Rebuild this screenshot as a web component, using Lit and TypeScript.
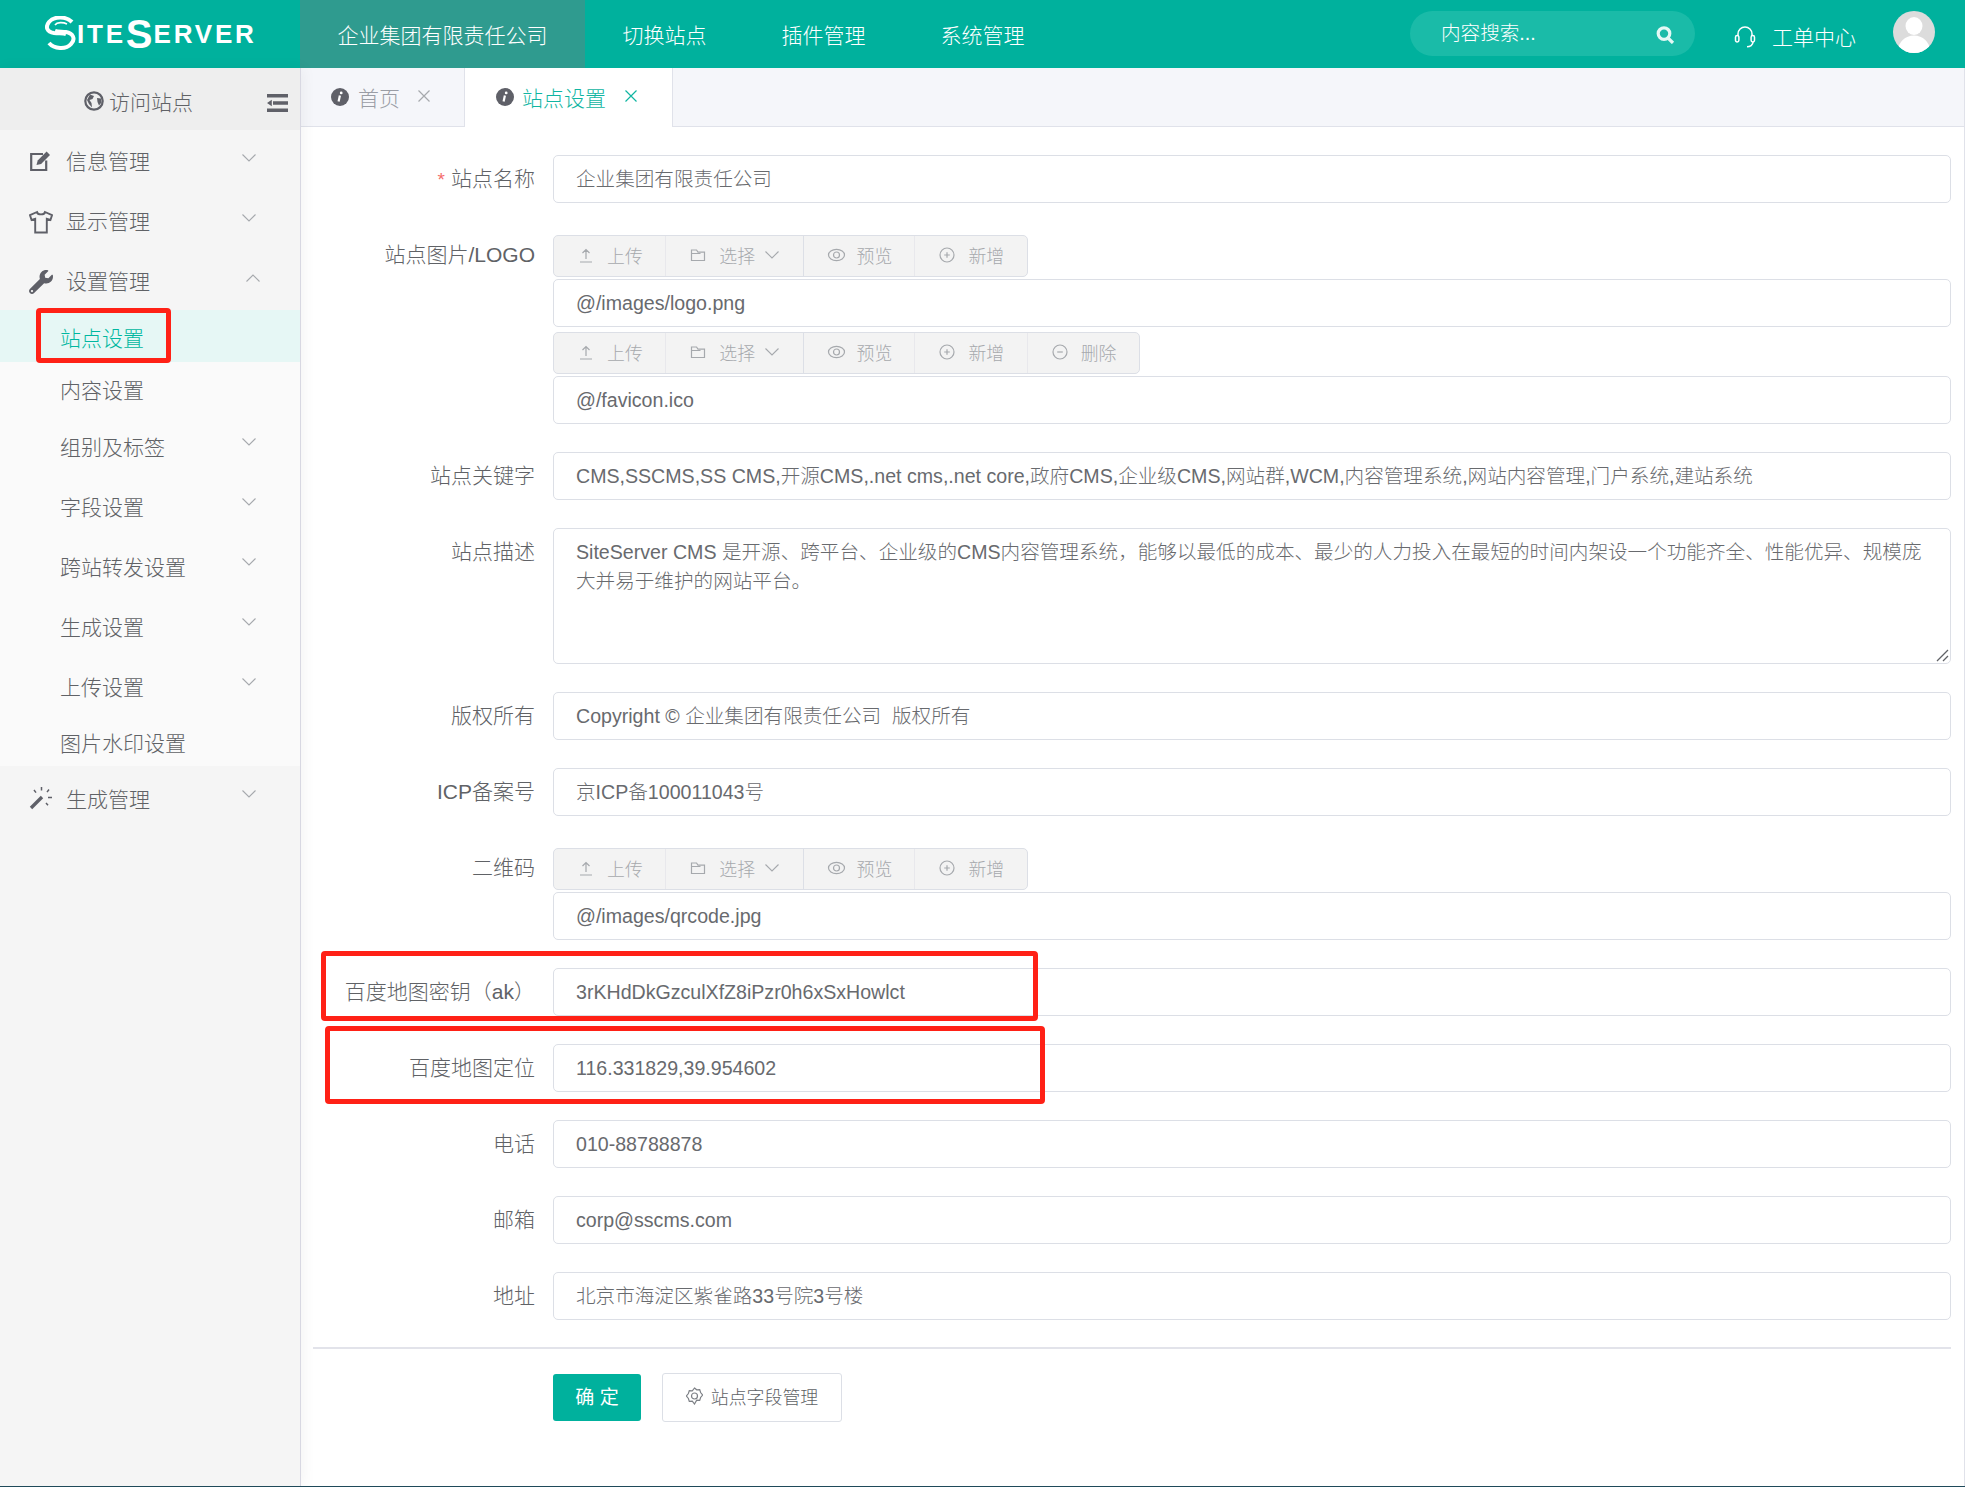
import { LitElement, html, css, svg } from "lit";
import { customElement } from "lit/decorators.js";

const wrench = "M507.73 109.1c-2.24-9.03-13.54-12.09-20.12-5.51l-74.36 74.36-67.88-11.31-11.31-67.88 74.36-74.36c6.62-6.62 3.43-17.9-5.66-20.16-47.38-11.74-99.55.91-136.58 37.93-39.64 39.64-50.55 97.1-34.05 147.2L18.74 402.76c-24.99 24.99-24.99 65.51 0 90.5 24.99 24.99 65.51 24.99 90.5 0l213.21-213.21c50.12 16.71 107.47 5.68 147.37-34.22 37.07-37.07 49.7-89.32 37.91-136.73zM64 472c-13.25 0-24-10.75-24-24 0-13.26 10.75-24 24-24s24 10.74 24 24c0 13.25-10.75 24-24 24z";

const ic = {
  edit: html`<svg width="22" height="22" viewBox="0 0 22 22"><path d="M14 4H2.2v16h15V10.5" fill="none" stroke="#5f6068" stroke-width="2.2"/><path d="M7.5 15l1.2-4.6L17.6 1.6l3.4 3.4-8.9 8.9z" fill="#5f6068"/></svg>`,
  shirt: html`<svg width="24" height="24" viewBox="0 0 24 24"><path d="M8 2 1 5.2 2.6 10l3.6-1.1V22.5h11.6V8.9l3.6 1.1L23 5.2 16 2c-.6 3.2-7.4 3.2-8 0z" fill="none" stroke="#5f6068" stroke-width="1.9"/></svg>`,
  wrench: html`<svg width="24" height="24" viewBox="0 0 512 512"><path d="${wrench}" fill="#5f6068"/></svg>`,
  wand: html`<svg width="24" height="24" viewBox="0 0 24 24"><path d="M2 22 13 11" stroke="#5f6068" stroke-width="3.4"/><path d="M12.5 1v3.5M5 4l2 2.6M20 3.5l-2 2.6M19 11.5h4M17 17l2 2.2" stroke="#5f6068" stroke-width="1.5" fill="none"/></svg>`,
  globe: html`<svg width="20" height="20" viewBox="0 0 20 20"><circle cx="10" cy="10" r="8.7" fill="none" stroke="#5f6068" stroke-width="2.2"/><path d="M6 3.5 10 5 8.5 8 5.5 9l2 3 .5 4.500L5 13 3 9zM13 7l4 .5.5 4-2.500 3-1.500-3.500z" fill="#5f6068"/></svg>`,
  menu: html`<svg width="21" height="18" viewBox="0 0 21 18"><path d="M0 0h21v3.4H0zM6 7.3h15v3.4H6zM0 14.6h21V18H0zM0 9l4.8-3.2v6.4z" fill="#5f6068"/></svg>`,
  search: html`<svg width="19" height="18" viewBox="0 0 19 18"><circle cx="8" cy="7.6" r="5.8" fill="none" stroke="#e3f8f5" stroke-width="3.2"/><path d="m12 12 5 5" stroke="#e3f8f5" stroke-width="3.2"/></svg>`,
  headset: html`<svg width="22" height="23" viewBox="0 0 22 23" fill="none" stroke="#fff" stroke-width="1.5"><path d="M4 11V9a7 7 0 0 1 14 0v2"/><rect x="1.5" y="10.5" width="3.4" height="6.5" rx="1.7"/><rect x="17.1" y="10.5" width="3.4" height="6.5" rx="1.7"/><path d="M19 17c0 3-3 4.8-6 4.8"/></svg>`,
  avatar: html`<svg width="42" height="42" viewBox="0 0 42 42"><defs><clipPath id="av"><circle cx="21" cy="21" r="21"/></clipPath></defs><g clip-path="url(#av)"><rect width="42" height="42" fill="#dcdcdc"/><ellipse cx="21" cy="15" rx="8.5" ry="9" fill="#fff"/><ellipse cx="21" cy="40" rx="16" ry="15.5" fill="#fff"/></g></svg>`,
  info: html`<svg width="18" height="18" viewBox="0 0 18 18"><circle cx="9" cy="9" r="9" fill="#5f6068"/><circle cx="10.2" cy="4.9" r="1.4" fill="#fff"/><path d="M8.9 7.6 7.6 13.4" stroke="#fff" stroke-width="2.2" fill="none"/></svg>`,
  upload: html`<svg width="16" height="16" viewBox="0 0 16 16" fill="none" stroke="#a6a9ad" stroke-width="1.2"><path d="M2 15h12M8 12V3M4.5 6 8 2.5 11.5 6"/></svg>`,
  folder: html`<svg width="16" height="16" viewBox="0 0 16 16" fill="none" stroke="#a6a9ad" stroke-width="1.2"><path d="M1.5 13.5V3h5l1.5 2.2h6.5v8.300zM1.5 6.500h9"/></svg>`,
  eye: html`<svg width="19" height="16" viewBox="0 0 19 16" fill="none" stroke="#a6a9ad" stroke-width="1.2"><ellipse cx="9.5" cy="8" rx="8" ry="5.6"/><circle cx="9.5" cy="8" r="3"/></svg>`,
  plus: html`<svg width="16" height="16" viewBox="0 0 16 16" fill="none" stroke="#a6a9ad" stroke-width="1.2"><circle cx="8" cy="8" r="7"/><path d="M8 5.2v5.6M5.2 8h5.6"/></svg>`,
  minus: html`<svg width="16" height="16" viewBox="0 0 16 16" fill="none" stroke="#a6a9ad" stroke-width="1.2"><circle cx="8" cy="8" r="7"/><path d="M5.2 8h5.6"/></svg>`,
  chev: html`<svg class="ch" width="14" height="8" viewBox="0 0 14 8"><path d="M.5.5 7 7 13.5.5" fill="none" stroke="#a6a9ad" stroke-width="1.1"/></svg>`,
  chevUp: html`<svg class="ch" width="14" height="8" viewBox="0 0 14 8"><path d="M.5 7.5 7 1l6.500 6.500" fill="none" stroke="#a6a9ad" stroke-width="1.1"/></svg>`,
  gear: html`<svg width="17" height="18" viewBox="0 0 17 18" fill="none" stroke="#7d8086" stroke-width="1.2"><path d="M8.500 1l2.200 1.800 3-.2.900 2.900 2 2.500-2 2.500-.9 2.900-3-.2L8.500 17l-2.200-2.800-3 .2-.9-2.900-2-2.500 2-2.500.9-2.900 3 .2z"/><circle cx="8.500" cy="9" r="3"/></svg>`,
  close: html`<svg width="12" height="12" viewBox="0 0 12 12"><path d="M.5.5l11 11M11.500.5l-11 11" stroke="currentColor" stroke-width="1.200"/></svg>`,
};

const logoMark = svg`<path d="M27 6C21 0 9 0 4 6c-4 5-2 10 5 11 5 .6 9 0 12 1" fill="none" stroke="#fff" stroke-width="4"/><path d="M4 27c5 6 17 7 22 1 5-5 2-11-5-12-4-.6-8 0-11-1.200" fill="none" stroke="#fff" stroke-width="4"/><path d="M22 8c-4-2-10-2-12 1" fill="none" stroke="#fff" stroke-width="1.600"/>`;

@customElement("app-root")
export class AppRoot extends LitElement {
  static styles = css`
    :host {
      display: block;
      position: relative;
      width: 1965px;
      height: 1487px;
      overflow: hidden;
      background: #fff;
      font-family: "Liberation Sans", "Noto Sans CJK SC", sans-serif;
      font-weight: 300;
      color: #606266;
      border-bottom: 1px solid #1f4a5a;
      box-sizing: border-box;
    }
    * { box-sizing: border-box; }
    .top {
      height: 68px;
      background: #00b19d;
      display: flex;
      align-items: center;
      color: #fff;
      font-size: 21px;
    }
    .logo {
      width: 300px;
      height: 68px;
      padding-left: 45px;
      display: flex;
      align-items: center;
      flex: none;
      font-weight: 700;
      font-size: 26px;
      line-height: 1;
      font-family: "Liberation Sans", sans-serif;
    }
    .logo svg { flex: none; margin: -2px 1px 0 0; }
    .logo .w { letter-spacing: 2.800px; }
    .logo .b { font-size: 40px; margin: 0 1px 1px 0; }
    .nav {
      height: 68px;
      padding: 0 37.500px;
      display: flex;
      align-items: center;
    }
    .nav.on { background: #2f9b8f; width: 285px; }
    .spacer { flex: 1; }
    .search {
      width: 285px;
      height: 45px;
      margin-top: -2px;
      border-radius: 23px;
      background: #1abba8;
      padding: 0 20px 4px 31px;
      display: flex;
      align-items: center;
      justify-content: space-between;
      font-size: 19.600px;
    }
    .search svg { margin-top: 8px; }
    .ticket {
      margin-left: 39px;
      display: flex;
      align-items: center;
      gap: 16px;
      padding-top: 4px;
    }
    .avatar { margin: -5px 30px 0 37px; height: 42px; }
    .body { display: flex; height: 1418px; }
    .side {
      width: 301px;
      flex: none;
      background: #f5f5f5;
      border-right: 1px solid #d8d8e2;
      box-shadow: 2px 0 14px rgba(0, 0, 0, 0.05);
      position: relative;
      font-size: 21px;
    }
    .side-head {
      height: 62px;
      background: #eeeeee;
      display: flex;
      align-items: center;
      padding: 4px 12px 0 84px;
      gap: 5px;
    }
    .side-head .menu { margin: 2px 0 0 auto; height: 18px; }
    .item {
      height: 60px;
      display: flex;
      align-items: center;
      padding: 0 44px 0 29px;
    }
    .item.open { padding-right: 40px; }
    .item .i { width: 22px; height: 24px; flex: none; margin: 3px 15px 0 0; }
    .ch { margin-left: auto; margin-bottom: 4px; flex: none; }
    .sub { background: #fafafa; }
    .sub .item { padding-left: 60px; }
    .sub .t { padding-top: 2.500px; }
    .sub .item:nth-child(n + 3) .t, .sub + .item .t { padding-top: 4.500px; }
    .sub .leaf { height: 52px; }
    .sub .leaf.on { background: #e6f7f5; color: #00b7a0; }
    .main { flex: 1; min-width: 0; border-right: 1px solid #e0e2ea; }
    .tabs {
      height: 59px;
      background: #f5f6fa;
      border-bottom: 1px solid #e0e2ea;
      display: flex;
      font-size: 21px;
    }
    .tab {
      height: 59px;
      display: flex;
      align-items: center;
      padding: 4px 34px 5px 30px;
      border-right: 1px solid #e0e2ea;
      color: #9a9da5;
    }
    .tab > svg { margin-right: 9px; }
    .tab .x { display: flex; margin: -2px 0 0 18px; color: #a6a9ad; }
    .tab.on { background: #fff; color: #10b5a2; height: 59px; padding: 4px 35px 5px 31px; }
    .tab.on > svg { margin-right: 8px; }
    .tab.on .x { color: #10b5a2; margin-left: 19px; }
    .form {
      padding: 28px 13px 0 12px;
      display: flex;
      flex-direction: column;
      gap: 28px;
      font-size: 19.600px;
    }
    .row { display: grid; grid-template-columns: 240px 1fr; }
    .label {
      font-size: 21px;
      line-height: 47px;
      text-align: right;
      padding-right: 18px;
      white-space: nowrap;
    }
    .req { color: #f56c6c; margin-right: 6px; font-size: 19px; }
    .input {
      height: 48px;
      line-height: 46px;
      border: 1px solid #dcdfe6;
      border-radius: 5px;
      padding: 0 22px;
      white-space: pre;
      background: #fff;
      color: #686a6e;
    }
    .area {
      position: relative;
      height: 136px;
      border: 1px solid #dcdfe6;
      border-radius: 5px;
      padding: 9px 22px;
      line-height: 29.400px;
      white-space: nowrap;
      color: #686a6e;
    }
    .area svg { position: absolute; right: 1px; bottom: 1px; }
    .stack { display: flex; flex-direction: column; }
    .stack.up { padding-top: 4px; }
    .group {
      display: inline-flex;
      align-self: flex-start;
      height: 42px;
      background: #f3f3f3;
      border: 1px solid #dcdfe6;
      border-radius: 5px;
      margin-bottom: 2px;
      color: #a6a9ad;
      font-size: 17.900px;
    }
    .group.next { margin-top: 5px; }
    .gb {
      display: flex;
      align-items: center;
      height: 100%;
      padding: 0 22.500px 2px 24px;
      gap: 13px;
      border-right: 1px solid #e8e8ec;
    }
    .gb:last-child { border-right: 0; }
    .gb.sel { padding-right: 23.500px; border-right-color: #dcdfe6; }
    .gb .ch { margin: 0 0 0 -3px; }
    .gb.eye { padding-left: 23px; gap: 11px; padding-right: 22px; }
    hr {
      margin: -1px 0 -4px 0;
      border: 0;
      border-top: 2px solid #e2e3ea;
      height: 0;
    }
    .actions { display: flex; align-items: center; padding-left: 240px; gap: 21px; }
    .ok {
      width: 88px;
      height: 47px;
      border-radius: 3px;
      background: #00b19d;
      color: #fff;
      display: flex;
      align-items: center;
      justify-content: center;
      padding-bottom: 4px;
      font-size: 19px;
      font-weight: 400;
    }
    .ghost {
      width: 180px;
      height: 49px;
      border: 1px solid #dcdfe6;
      border-radius: 3px;
      display: flex;
      align-items: center;
      justify-content: center;
      gap: 8px;
      padding-bottom: 4px;
      font-size: 17.900px;
    }
    .mark {
      position: absolute;
      border: 5px solid #ff2116;
      border-radius: 4px;
      pointer-events: none;
    }
    .m1 { left: 36px; top: 308px; width: 135px; height: 55px; }
    .m2 { left: 321px; top: 951px; width: 717px; height: 70px; }
    .m3 { left: 325px; top: 1026px; width: 720px; height: 78px; }
  `;

  private menu(label: string, icon: unknown, chev = ic.chev, open = false) {
    return html`<div class="item ${open ? "open" : ""}"><span class="i">${icon}</span><span class="t">${label}</span>${chev}</div>`;
  }
  private subGroup(label: string) {
    return html`<div class="item"><span class="t">${label}</span>${ic.chev}</div>`;
  }
  private group(del = false, next = false) {
    return html`<div class="group ${next ? "next" : ""}">
      <div class="gb">${ic.upload}<span>上传</span></div>
      <div class="gb sel">${ic.folder}<span>选择</span>${ic.chev}</div>
      <div class="gb eye">${ic.eye}<span>预览</span></div>
      <div class="gb">${ic.plus}<span>新增</span></div>
      ${del ? html`<div class="gb">${ic.minus}<span>删除</span></div>` : ""}
    </div>`;
  }
  private row(label: string, value: string) {
    return html`<div class="row"><div class="label">${label}</div><div class="input">${value}</div></div>`;
  }

  render() {
    return html`
      <div class="top">
        <div class="logo">
          <svg width="31" height="35" viewBox="0 0 31 35">${logoMark}</svg>
          <span class="w">ITE</span><span class="b">S</span><span class="w">ERVER</span>
        </div>
        <div class="nav on">企业集团有限责任公司</div>
        <div class="nav">切换站点</div>
        <div class="nav">插件管理</div>
        <div class="nav">系统管理</div>
        <div class="spacer"></div>
        <div class="search"><span>内容搜索...</span>${ic.search}</div>
        <div class="ticket">${ic.headset}<span>工单中心</span></div>
        <div class="avatar">${ic.avatar}</div>
      </div>
      <div class="body">
        <aside class="side">
          <div class="side-head">${ic.globe}<span>访问站点</span><span class="menu">${ic.menu}</span></div>
          ${this.menu("信息管理", ic.edit)}
          ${this.menu("显示管理", ic.shirt)}
          ${this.menu("设置管理", ic.wrench, ic.chevUp, true)}
          <div class="sub">
            <div class="item leaf on"><span class="t">站点设置</span></div>
            <div class="item leaf"><span class="t">内容设置</span></div>
            ${this.subGroup("组别及标签")}
            ${this.subGroup("字段设置")}
            ${this.subGroup("跨站转发设置")}
            ${this.subGroup("生成设置")}
            ${this.subGroup("上传设置")}
            <div class="item leaf"><span class="t">图片水印设置</span></div>
          </div>
          ${this.menu("生成管理", ic.wand)}
        </aside>
        <main class="main">
          <div class="tabs">
            <div class="tab">${ic.info}<span>首页</span><span class="x">${ic.close}</span></div>
            <div class="tab on">${ic.info}<span>站点设置</span><span class="x">${ic.close}</span></div>
          </div>
          <div class="form">
            <div class="row">
              <div class="label"><span class="req">*</span>站点名称</div>
              <div class="input">企业集团有限责任公司</div>
            </div>
            <div class="row">
              <div class="label">站点图片/LOGO</div>
              <div class="stack up">
                ${this.group()}
                <div class="input">@/images/logo.png</div>
                ${this.group(true, true)}
                <div class="input">@/favicon.ico</div>
              </div>
            </div>
            ${this.row("站点关键字", "CMS,SSCMS,SS CMS,开源CMS,.net cms,.net core,政府CMS,企业级CMS,网站群,WCM,内容管理系统,网站内容管理,门户系统,建站系统")}
            <div class="row">
              <div class="label">站点描述</div>
              <div class="area">SiteServer CMS 是开源、跨平台、企业级的CMS内容管理系统，能够以最低的成本、最少的人力投入在最短的时间内架设一个功能齐全、性能优异、规模庞<br />大并易于维护的网站平台。
                <svg width="13" height="13" viewBox="0 0 13 13"><path d="M1 12 12 1M7 12l5-5" stroke="#606266" stroke-width="1.300"/></svg>
              </div>
            </div>
            ${this.row("版权所有", "Copyright © 企业集团有限责任公司  版权所有")}
            ${this.row("ICP备案号", "京ICP备100011043号")}
            <div class="row">
              <div class="label">二维码</div>
              <div class="stack up">
                ${this.group()}
                <div class="input">@/images/qrcode.jpg</div>
              </div>
            </div>
            ${this.row("百度地图密钥（ak）", "3rKHdDkGzculXfZ8iPzr0h6xSxHowlct")}
            ${this.row("百度地图定位", "116.331829,39.954602")}
            ${this.row("电话", "010-88788878")}
            ${this.row("邮箱", "corp@sscms.com")}
            ${this.row("地址", "北京市海淀区紫雀路33号院3号楼")}
            <hr />
            <div class="actions">
              <div class="ok">确 定</div>
              <div class="ghost">${ic.gear}<span>站点字段管理</span></div>
            </div>
          </div>
        </main>
      </div>
      <div class="mark m1"></div>
      <div class="mark m2"></div>
      <div class="mark m3"></div>
    `;
  }
}
